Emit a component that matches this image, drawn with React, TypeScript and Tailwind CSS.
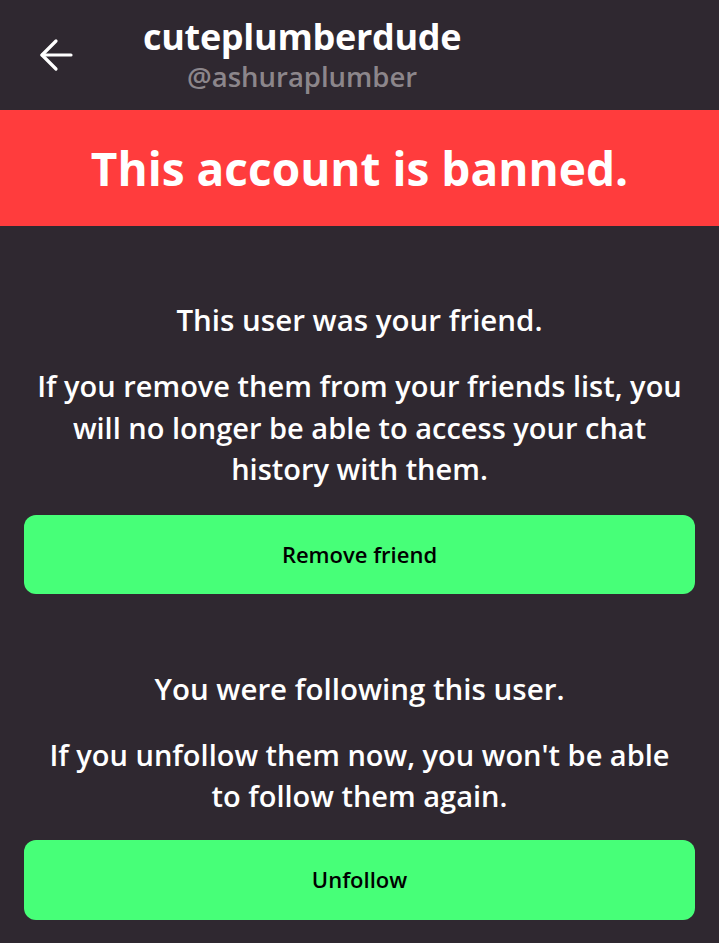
export default function App() {
  return (
    <div
      className="min-h-[943px] w-full bg-[#2f2830] text-white"
      style={{ fontFamily: '"Open Sans", "Noto Sans", sans-serif' }}
    >
      {/* header */}
      <header className="flex h-[110px] items-start">
        <button className="ml-[38px] mt-[38px] flex h-[34px] w-[36px] items-center justify-center text-white">
          <svg width="34" height="34" viewBox="0 0 34 34" fill="none" stroke="currentColor" strokeWidth="3.2" strokeLinecap="round" strokeLinejoin="round">
            <path d="M32 17H3" />
            <path d="M17 3L3 17l14 14" />
          </svg>
        </button>
        <div className="ml-[69px] mt-[14px] flex flex-col items-center">
          <h1 className="text-[36px] font-bold leading-[46px] tracking-[-0.3px]">cuteplumberdude</h1>
          <p className="mt-[-1px] text-[27.5px] font-semibold leading-[36px] text-[#8c868b]">@ashuraplumber</p>
        </div>
      </header>

      {/* banned banner */}
      <div className="flex h-[116px] items-center justify-center bg-[#ff3c3d]">
        <p className="text-[46px] font-bold leading-none">This account is banned.</p>
      </div>

      <main className="px-6 pb-6 text-center">
        <section className="pt-[73px]">
          <h2 className="text-[29.5px] font-semibold leading-[41px]">This user was your friend.</h2>
          <p className="mt-[25px] text-[29px] font-semibold leading-[41.5px]">
            If you remove them from your friends list, you
            <br />
            will no longer be able to access your chat
            <br />
            history with them.
          </p>
          <button className="mt-[25px] flex h-[79px] w-full items-center justify-center rounded-xl bg-[#47ff78] text-[22px] font-semibold text-black">
            Remove friend
          </button>
        </section>

        <section className="pt-[74px]">
          <h2 className="text-[29.5px] font-semibold leading-[41px]">You were following this user.</h2>
          <p className="mt-[25px] text-[29px] font-semibold leading-[41.5px]">
            If you unfollow them now, you won't be able
            <br />
            to follow them again.
          </p>
          <button className="mt-[23px] flex h-[80px] w-full items-center justify-center rounded-xl bg-[#47ff78] text-[22px] font-semibold text-black">
            Unfollow
          </button>
        </section>
      </main>
    </div>
  );
}
